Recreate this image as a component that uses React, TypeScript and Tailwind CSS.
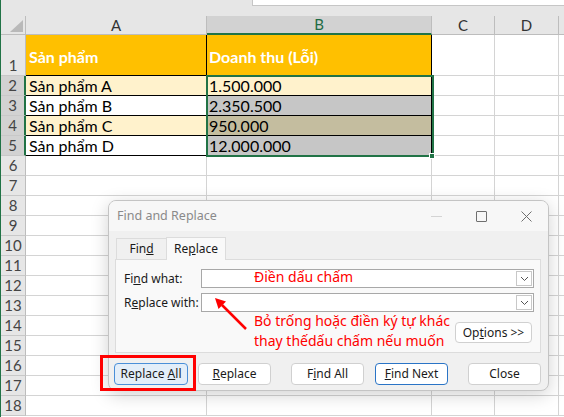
import React from "react";

const cellFont = { fontFamily: "Lato, 'Noto Sans', sans-serif" };
const uiFont = { fontFamily: "'Noto Sans', 'Open Sans', sans-serif" };

type RowData = {
  a: string;
  b: string;
  aBg: string;
  bBg: string;
  bold?: boolean;
};

const tableRows: RowData[] = [
  { a: "Sản phẩm", b: "Doanh thu (Lỗi)", aBg: "bg-[#ffc000]", bBg: "bg-[#ffc000]", bold: true },
  { a: "Sản phẩm A", b: "1.500.000", aBg: "bg-[#fff2cc]", bBg: "bg-[#fff2cc]" },
  { a: "Sản phẩm B", b: "2.350.500", aBg: "bg-white", bBg: "bg-[#c6c6c6]" },
  { a: "Sản phẩm C", b: "950.000", aBg: "bg-[#fff2cc]", bBg: "bg-[#c4bd9f]" },
  { a: "Sản phẩm D", b: "12.000.000", aBg: "bg-white", bBg: "bg-[#c6c6c6]" },
];

const gridCols = "grid grid-cols-[25px_181px_225px_63px_64px_1fr] grid-rows-[100%] overflow-hidden";

function RowHead({ n, selected }: { n: number; selected?: boolean }) {
  return (
    <div
      className={`flex items-end justify-center border-b border-[#c8c8c8] pb-[2px] text-[15px] leading-none text-[#444] ${
        selected
          ? "border-r-2 border-r-[#217346] bg-[#d2d2d2]"
          : "border-r border-r-[#bdbdbd] bg-[#e6e6e6]"
      }`}
    >
      {n}
    </div>
  );
}

function EmptyCell() {
  return <div className="border-b border-r border-[#d4d4d4]" />;
}

function Sheet() {
  const empty = Array.from({ length: 13 }, (_, i) => i + 6);
  return (
    <div style={cellFont}>
      {/* column headers */}
      <div className={`${gridCols} h-[19px] bg-[#e6e6e6] text-[15px] leading-none text-[#333]`}>
        <div className="relative border-b border-r border-[#bdbdbd]">
          <svg className="absolute left-0 top-0" width="25" height="19">
            <polygon points="9,16 22,16 22,4" fill="#b9b9b9" />
          </svg>
        </div>
        <div className="flex items-center justify-center border-b border-r border-[#bdbdbd]">A</div>
        <div className="flex items-center justify-center border-b-2 border-r border-b-[#217346] border-r-[#bdbdbd] bg-[#d2d2d2] text-[#1e6b44]">
          B
        </div>
        <div className="flex items-center justify-center border-b border-r border-[#bdbdbd]">C</div>
        <div className="flex items-center justify-center border-b border-r border-[#bdbdbd]">D</div>
        <div className="border-b border-[#bdbdbd]" />
      </div>

      {tableRows.map((r, i) => (
        <div key={i} className={`${gridCols} ${i === 0 ? "h-[41px]" : "h-[20px]"}`}>
          <RowHead n={i + 1} selected={i > 0} />
          <div
            className={`flex items-center border-b border-r border-black pl-[3px] text-[16px] leading-[18px] ${r.aBg} ${
              r.bold ? "pt-[4px] font-bold text-white" : "text-black"
            }`}
          >
            {r.a}
          </div>
          <div
            className={`flex items-center border-b border-r border-black pl-[2px] text-[16px] leading-[18px] ${r.bBg} ${
              r.bold ? "pt-[4px] font-bold text-white" : "text-black"
            }`}
          >
            {r.b}
          </div>
          <EmptyCell />
          <EmptyCell />
          <div className="border-b border-[#d4d4d4]" />
        </div>
      ))}

      {empty.map((n) => (
        <div key={n} className={`${gridCols} h-[20px]`}>
          <RowHead n={n} />
          <EmptyCell />
          <EmptyCell />
          <EmptyCell />
          <EmptyCell />
          <div className="border-b border-[#d4d4d4]" />
        </div>
      ))}
    </div>
  );
}

function Chevron() {
  return (
    <svg width="9" height="6" viewBox="0 0 9 6">
      <path d="M1 1 L4.5 4.5 L8 1" fill="none" stroke="#555" strokeWidth="1" />
    </svg>
  );
}

function ComboInput() {
  return (
    <div className="flex h-[19px] w-[333px] items-stretch border border-[#a8a8a8] bg-white">
      <div className="flex-1" />
      <div className="m-[1px] flex w-[16px] items-center justify-center border border-[#c8c8c8] bg-white">
        <Chevron />
      </div>
    </div>
  );
}

function Btn({
  children,
  w,
  variant = "plain",
}: {
  children: React.ReactNode;
  w: string;
  variant?: "plain" | "focus" | "default";
}) {
  const look =
    variant === "focus"
      ? "border-[#4a8fd8] bg-[#e3eef9]"
      : variant === "default"
        ? "border-[#2a74c6] bg-white"
        : "border-[#d0d0d0] bg-white";
  return (
    <div
      className={`flex h-[22px] ${w} items-center justify-center whitespace-pre rounded-[4px] border text-[12px] text-[#1a1a1a] ${look}`}
    >
      {children}
    </div>
  );
}

function Dialog() {
  return (
    <div
      className="absolute left-[107px] top-[200px] flex h-[191px] w-[441px] flex-col overflow-hidden rounded-[8px] border border-[#c4c4c4] bg-[#f0f0f0] shadow-[0_4px_18px_rgba(0,0,0,0.18)]"
      style={uiFont}
    >
      {/* title bar */}
      <div className="flex h-[30px] shrink-0 items-center bg-[#f7f7f7] pl-[8px] text-[12.5px] text-[#8a8a8a]">
        <span className="flex-1">Find and Replace</span>
        <div className="flex items-center">
          <span className="mr-[34px] h-px w-[11px] bg-[#d4d4d4]" />
          <span className="mr-[34px] h-[11px] w-[11px] rounded-[1px] border border-[#6f6f6f]" />
          <svg className="mr-[16px]" width="11" height="11" viewBox="0 0 11 11">
            <path d="M0.5 0.5 L10.5 10.5 M10.5 0.5 L0.5 10.5" stroke="#6f6f6f" strokeWidth="1" />
          </svg>
        </div>
      </div>

      {/* tabs */}
      <div className="flex items-end pl-[7px] pt-[6px] text-[12px] text-[#1a1a1a]">
        <div className="flex h-[21px] w-[50px] items-center justify-center border-l border-t border-[#dcdcdc] bg-[#f0f0f0]">
          Fin<span className="underline">d</span>
        </div>
        <div className="relative z-10 -mb-px flex h-[23px] w-[60px] items-center justify-center border-l border-r border-t border-[#dcdcdc] bg-[#f9f9f9]">
          Re<span className="underline">p</span>lace
        </div>
      </div>

      {/* panel */}
      <div className="ml-[6px] flex h-[94px] w-[426px] flex-col border border-[#dcdcdc] bg-[#f9f9f9] pt-[9px] text-[12px] text-[#1a1a1a]">
        <div className="flex items-center">
          <span className="w-[85px] pl-[8px]">
            Fi<span className="underline">n</span>d what:
          </span>
          <ComboInput />
        </div>
        <div className="mt-[5px] flex items-center">
          <span className="w-[85px] pl-[8px]">
            R<span className="underline">e</span>place with:
          </span>
          <ComboInput />
        </div>
        <div className="mr-[8px] mt-[10px] flex justify-end">
          <div className="flex h-[21px] w-[77px] items-center justify-center rounded-[4px] border border-[#d0d0d0] bg-white">
            Op<span className="underline">t</span>ions &gt;&gt;
          </div>
        </div>
      </div>

      {/* buttons */}
      <div className="ml-[5px] mt-[10px] flex items-center">
        <Btn w="w-[74px]" variant="focus">
          {"Replace "}
          <span className="underline">A</span>ll
        </Btn>
        <div className="ml-[10px]">
          <Btn w="w-[73px]">
            <span className="underline">R</span>eplace
          </Btn>
        </div>
        <div className="ml-[20px]">
          <Btn w="w-[73px]">
            F<span className="underline">i</span>nd All
          </Btn>
        </div>
        <div className="ml-[11px]">
          <Btn w="w-[73px]" variant="default">
            <span className="underline">F</span>ind Next
          </Btn>
        </div>
        <div className="ml-[20px]">
          <Btn w="w-[73px]">Close</Btn>
        </div>
      </div>
    </div>
  );
}

export default function App() {
  return (
    <div className="relative h-[417px] w-[564px] overflow-hidden border-l border-[#217346] bg-white">
      {/* formula bar strip */}
      <div className="flex h-[16px] items-start bg-[#e6e6e6]">
        <div className="w-[251px]" />
        <div className="h-[6px] flex-1 border-b border-l border-[#c6c6c6] bg-white" />
      </div>

      <Sheet />

      {/* selection B2:B5 */}
      <div className="pointer-events-none absolute left-[205px] top-[75px] h-[82px] w-[228px] border-2 border-[#217346]" />
      <div className="absolute left-[428px] top-[153px] h-[6px] w-[6px] border border-white bg-[#217346]" />

      <Dialog />

      {/* annotations */}
      <div className="absolute left-[253px] top-[267px] text-[14px] leading-[20px] text-[#ff0000]" style={uiFont}>
        Điền dấu chấm
      </div>
      <div className="absolute left-[253px] top-[311px] text-[14px] leading-[20px] text-[#ff0000]" style={uiFont}>
        <div>Bỏ trống hoặc điền ký tự khác</div>
        <div>thay thếdấu chấm nếu muốn</div>
      </div>

      <svg className="absolute left-0 top-0" width="564" height="417">
        <line x1="245" y1="329" x2="221" y2="305" stroke="#ff0000" strokeWidth="2.5" />
        <polygon points="214,298 225,301.5 217.5,309" fill="#ff0000" />
      </svg>

      <div className="absolute left-[99px] top-[355px] h-[36px] w-[96px] border-[3px] border-[#ff0000]" />
    </div>
  );
}
